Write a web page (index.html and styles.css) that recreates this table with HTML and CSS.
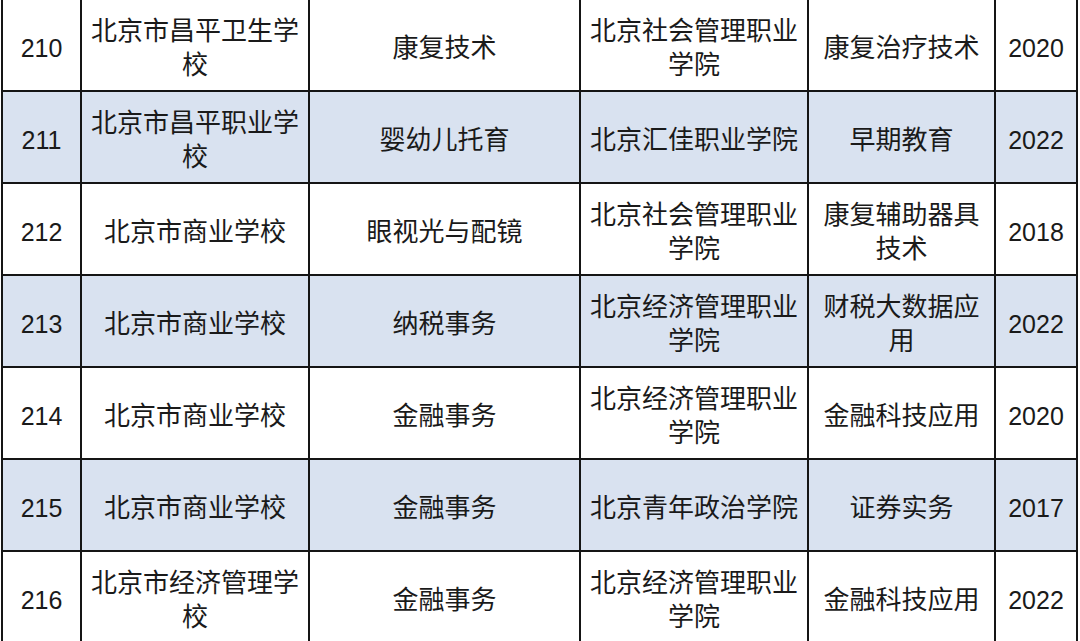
FILE: index.html
```html
<!DOCTYPE html>
<html lang="zh-CN">
<head>
<meta charset="utf-8">
<title>表格</title>
<link rel="stylesheet" href="styles.css">
</head>
<body>
<div class="table">
  <div class="row">
    <div class="cell num">210</div><div class="cell">北京市昌平卫生学校</div><div class="cell">康复技术</div><div class="cell">北京社会管理职业学院</div><div class="cell">康复治疗技术</div><div class="cell num">2020</div>
  </div>
  <div class="row shaded">
    <div class="cell num">211</div><div class="cell">北京市昌平职业学校</div><div class="cell">婴幼儿托育</div><div class="cell">北京汇佳职业学院</div><div class="cell">早期教育</div><div class="cell num">2022</div>
  </div>
  <div class="row">
    <div class="cell num">212</div><div class="cell">北京市商业学校</div><div class="cell">眼视光与配镜</div><div class="cell">北京社会管理职业学院</div><div class="cell">康复辅助器具技术</div><div class="cell num">2018</div>
  </div>
  <div class="row shaded">
    <div class="cell num">213</div><div class="cell">北京市商业学校</div><div class="cell">纳税事务</div><div class="cell">北京经济管理职业学院</div><div class="cell">财税大数据应用</div><div class="cell num">2022</div>
  </div>
  <div class="row">
    <div class="cell num">214</div><div class="cell">北京市商业学校</div><div class="cell">金融事务</div><div class="cell">北京经济管理职业学院</div><div class="cell">金融科技应用</div><div class="cell num">2020</div>
  </div>
  <div class="row shaded">
    <div class="cell num">215</div><div class="cell">北京市商业学校</div><div class="cell">金融事务</div><div class="cell">北京青年政治学院</div><div class="cell">证券实务</div><div class="cell num">2017</div>
  </div>
  <div class="row">
    <div class="cell num">216</div><div class="cell">北京市经济管理学校</div><div class="cell">金融事务</div><div class="cell">北京经济管理职业学院</div><div class="cell">金融科技应用</div><div class="cell num">2022</div>
  </div>
</div>
</body>
</html>
```
FILE: styles.css
```css
html, body {
  margin: 0;
  padding: 0;
  background: #ffffff;
  overflow: hidden;
}
body {
  font-family: "Liberation Sans", "Noto Sans CJK SC", sans-serif;
  color: #1a1a1a;
}
.table {
  margin-left: 1px;
  width: 1077px;
  box-sizing: border-box;
  padding: 0 2px;
  background: #151515;
  display: flex;
  flex-direction: column;
  gap: 2px;
}
.row {
  display: grid;
  grid-template-columns: 77px 226px 269px 226px 185px 80px;
  column-gap: 2px;
  height: 90px;
}
.cell {
  background: #ffffff;
  display: flex;
  align-items: center;
  justify-content: center;
  text-align: center;
  padding: 6px 6px 0;
  font-size: 26px;
  line-height: 34px;
  box-sizing: border-box;
}
.row.shaded .cell {
  background: #d9e2f0;
}
.cell.num {
  font-size: 25px;
  padding: 6px 0 0;
}
```
